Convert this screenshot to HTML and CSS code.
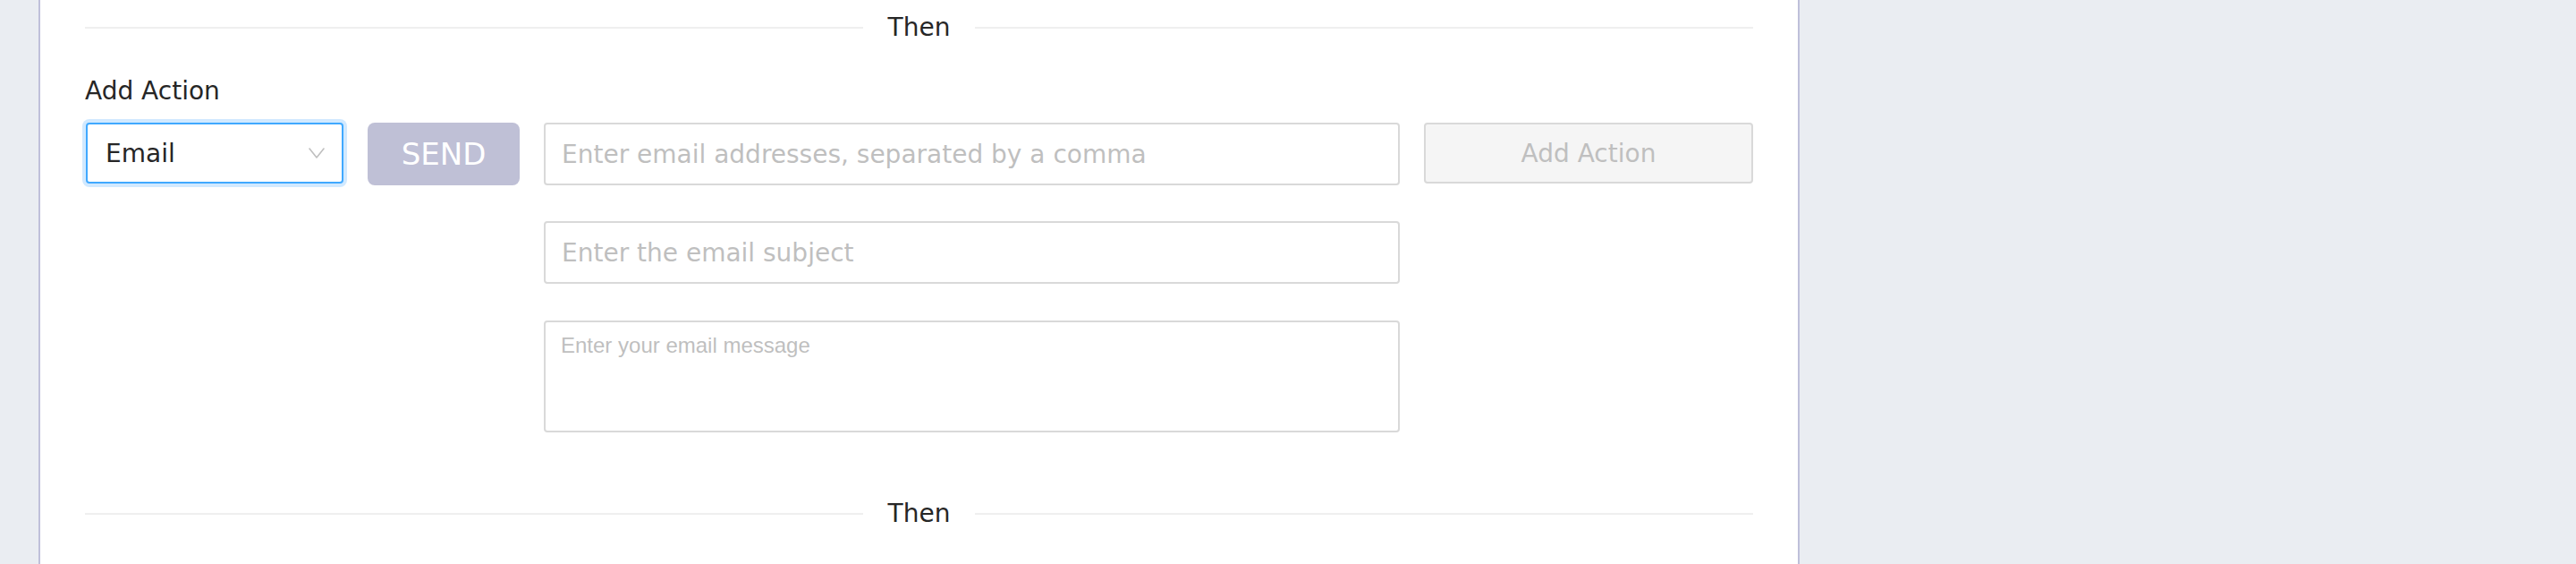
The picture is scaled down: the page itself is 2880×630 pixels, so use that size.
FILE: index.html
```html
<!DOCTYPE html>
<html lang="en">
<head>
<meta charset="utf-8">
<title>Add Action</title>
<link rel="stylesheet" href="styles.css">
</head>
<body>
<div class="page">
  <div class="card">
    <div class="divider">
      <span class="divider-line"></span>
      <span class="divider-text">Then</span>
      <span class="divider-line"></span>
    </div>
    <div class="section-label">Add Action</div>
    <div class="action-row">
      <div class="select">
        <span class="select-value">Email</span>
        <svg class="select-arrow" width="18" height="12" viewBox="0 0 18 12"><polyline points="1,1 9,11 17,1" fill="none" stroke="#bfbfbf" stroke-width="1.6" stroke-linejoin="round" stroke-linecap="round"/></svg>
      </div>
      <button class="send-btn" type="button" disabled>SEND</button>
      <div class="fields">
        <input class="field" type="text" placeholder="Enter email addresses, separated by a comma">
        <input class="field" type="text" placeholder="Enter the email subject">
        <textarea class="field field-area" placeholder="Enter your email message"></textarea>
      </div>
      <button class="add-btn" type="button" disabled>Add Action</button>
    </div>
    <div class="divider divider-bottom">
      <span class="divider-line"></span>
      <span class="divider-text">Then</span>
      <span class="divider-line"></span>
    </div>
  </div>
</div>
</body>
</html>
```
FILE: styles.css
```css
html, body {
  margin: 0;
  padding: 0;
}
body {
  background: #eaedf2;
  font-family: "DejaVu Sans", sans-serif;
  color: #262626;
  overflow: hidden;
}
.page {
  height: 630px;
  overflow: hidden;
}
.card {
  box-sizing: border-box;
  margin-left: 43px;
  width: 1969px;
  min-height: 630px;
  background: #ffffff;
  border-left: 2px solid #bfc0da;
  border-right: 2px solid #bfc0da;
  padding: 14px 50px 0 50px;
}
.divider {
  display: flex;
  align-items: center;
  height: 34px;
}
.divider-line {
  flex: 1;
  height: 2px;
  background: #efefef;
}
.divider-text {
  padding: 0 28px;
  font-size: 28px;
  line-height: 34px;
  color: #262626;
}
.divider-bottom {
  margin-top: 74px;
}
.section-label {
  margin-top: 37px;
  font-size: 28px;
  line-height: 34px;
  color: #262626;
}
.action-row {
  margin-top: 18px;
  display: grid;
  grid-template-columns: 289px 170px 957px 1fr;
  column-gap: 27px;
  align-items: start;
}
.select {
  box-sizing: border-box;
  margin-left: 1px;
  height: 68px;
  border: 2px solid #40a9ff;
  border-radius: 4px;
  box-shadow: 0 0 0 4px rgba(24, 144, 255, 0.2);
  background: #fff;
  display: flex;
  align-items: center;
  justify-content: space-between;
  padding: 0 19px 0 20px;
}
.select-value {
  font-size: 28px;
  color: #262626;
}
.select-arrow {
  display: block;
}
.send-btn {
  box-sizing: border-box;
  height: 70px;
  border: none;
  border-radius: 8px;
  background: #bfc0d6;
  color: #ffffff;
  font-family: "DejaVu Sans", sans-serif;
  font-size: 34px;
  padding: 0;
}
.fields {
  display: flex;
  flex-direction: column;
  gap: 40px;
}
.field {
  box-sizing: border-box;
  display: block;
  width: 100%;
  height: 70px;
  margin: 0;
  border: 2px solid #d9d9d9;
  border-radius: 4px;
  background: #fff;
  padding: 0 18px;
  font-family: "DejaVu Sans", sans-serif;
  font-size: 28px;
  color: #262626;
  outline: none;
}
.field::placeholder {
  color: #bfbfbf;
  opacity: 1;
}
.field-area {
  height: 125px;
  margin-top: 1px;
  padding: 7px 17px;
  resize: none;
  font-family: "Liberation Sans", Arial, sans-serif;
  font-size: 24px;
  line-height: 38px;
}
.add-btn {
  box-sizing: border-box;
  height: 68px;
  border: 2px solid #d9d9d9;
  border-radius: 4px;
  background: #f5f5f5;
  color: #bfbfbf;
  font-family: "DejaVu Sans", sans-serif;
  font-size: 28px;
  padding: 0;
}
```
